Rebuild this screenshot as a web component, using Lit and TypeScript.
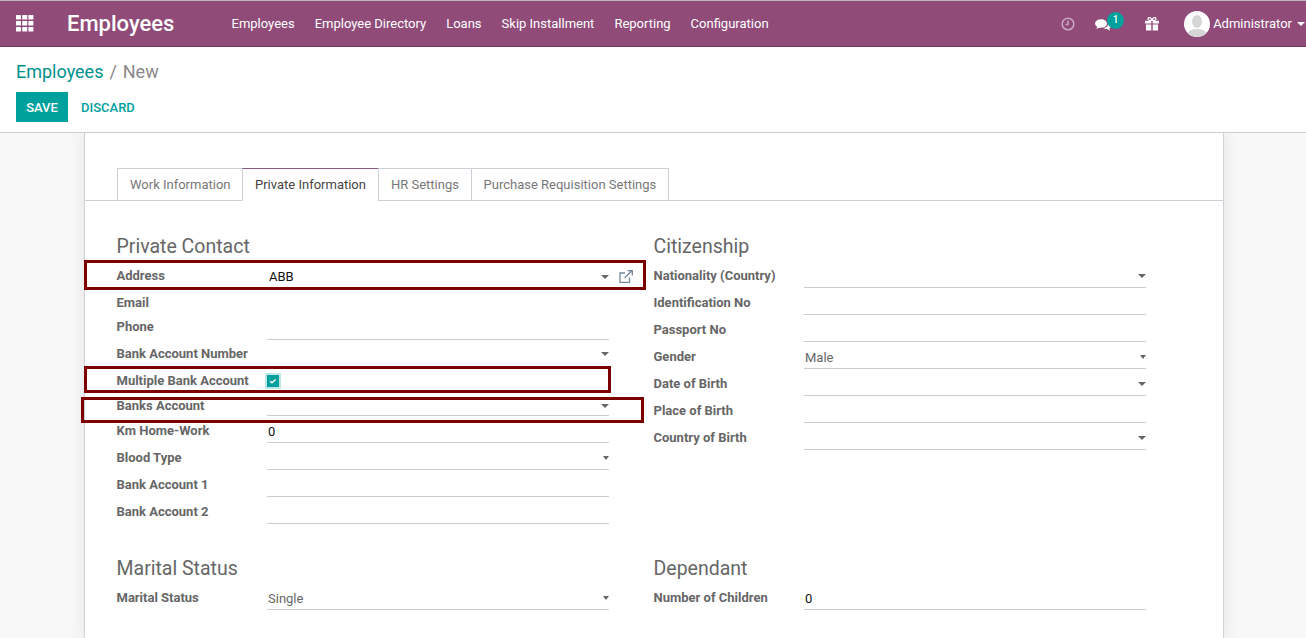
import { LitElement, html, css, svg } from "lit";
import { customElement } from "lit/decorators.js";

type Field = {
  label: string;
  h: number;
  value?: string;
  line?: boolean;
  caret?: boolean;
  small?: boolean;
  dark?: boolean;
  // label and value nudges, the source rows are not evenly spaced
  lt?: number;
  vt?: number;
  vx?: number;
};

const left: Field[] = [
  { label: "Address", h: 27, value: "ABB", caret: true, dark: true, lt: 3, vx: 2 },
  { label: "Email", h: 24, lt: 3 },
  { label: "Phone", h: 26, line: true, lt: 3 },
  { label: "Bank Account Number", h: 27, line: true, caret: true, lt: 4 },
  { label: "Multiple Bank Account", h: 25, lt: 4 },
  { label: "Banks Account", h: 24, line: true, caret: true, lt: 4 },
  { label: "Km Home-Work", h: 27, value: "0", line: true, dark: true, lt: 5, vt: 6 },
  { label: "Blood Type", h: 27, line: true, caret: true, small: true, lt: 5 },
  { label: "Bank Account 1", h: 27, line: true, lt: 5 },
  { label: "Bank Account 2", h: 27, line: true, lt: 5 },
];

const right: Field[] = [
  { label: "Nationality (Country)", h: 27, line: true, caret: true, lt: 5 },
  { label: "Identification No", h: 27, line: true, lt: 5 },
  { label: "Passport No", h: 27, line: true, lt: 5 },
  { label: "Gender", h: 27, value: "Male", line: true, caret: true, small: true, lt: 5, vt: 6 },
  { label: "Date of Birth", h: 27, line: true, caret: true, lt: 5 },
  { label: "Place of Birth", h: 27, line: true, lt: 5 },
  { label: "Country of Birth", h: 27, line: true, caret: true, lt: 5 },
];

const menu = ["Employees", "Employee Directory", "Loans", "Skip Installment", "Reporting", "Configuration"];
const tabs = ["Work Information", "Private Information", "HR Settings", "Purchase Requisition Settings"];

@customElement("app-root")
export class AppRoot extends LitElement {
  static styles = css`
    :host {
      display: block;
      height: 638px;
      overflow: hidden;
      position: relative;
      font-family: Roboto, "Liberation Sans", sans-serif;
      font-size: 13px;
      color: #666;
      background: #f8f8f8;
    }

    .navbar {
      box-sizing: border-box;
      height: 47px;
      display: flex;
      align-items: center;
      background: #904b79;
      border-top: 1px solid #b9b9b9;
      border-bottom: 1px solid #70385d;
      color: #fff;
    }

    .apps {
      display: block;
      margin-left: 16px;
    }

    .brand {
      margin-left: 33px;
      width: 164.5px;
      font-size: 22px;
      font-weight: 500;
    }

    .menu {
      display: flex;
      gap: 20px;
      font-size: 13px;
    }

    .systray {
      margin-left: auto;
      display: flex;
      align-items: center;
    }

    .clock { margin-right: 20px; }

    .chat {
      position: relative;
      margin-right: 34px;
      display: block;
      height: 14px;
      top: 1px;
    }

    .badge {
      position: absolute;
      left: 12px;
      top: -6px;
      width: 17px;
      height: 17px;
      border-radius: 50%;
      background: #00a09d;
      font-size: 10px;
      font-weight: 500;
      line-height: 16px;
      text-align: center;
    }

    .gift { margin-right: 25px; }

    .avatar { margin-right: 3px; }

    .user-caret {
      margin: 0 1px 0 5px;
      border-top: 4px solid #fff;
      border-left: 4px solid transparent;
      border-right: 4px solid transparent;
    }

    .control {
      position: relative;
      z-index: 1;
      box-sizing: border-box;
      height: 86px;
      padding: 14px 16px 0;
      background: #fff;
      border-bottom: 1px solid #ccc;
    }

    .crumbs {
      font-size: 18px;
      line-height: 21px;
      color: #888;
    }

    .crumbs a { color: #00918e; }

    .crumbs span { margin: 0 1.5px; }

    .actions {
      display: flex;
      align-items: center;
      margin-top: 10px;
    }

    .save {
      width: 52px;
      height: 30px;
      background: #00a09d;
      color: #fff;
      font-weight: 500;
      line-height: 31px;
      text-align: center;
    }

    .discard {
      margin-left: 13px;
      color: #00a09d;
      font-weight: 500;
    }

    .sheet {
      box-sizing: border-box;
      width: 1140px;
      height: 506px;
      margin-left: 84px;
      padding-top: 35px;
      background: #fff;
      border-left: 1px solid #cfd2d8;
      border-right: 1px solid #cfd2d8;
      box-shadow: 0 0 16px rgba(0, 0, 0, 0.09);
    }

    .tabs {
      display: flex;
      height: 33px;
      box-sizing: border-box;
      padding-left: 32px;
      border-bottom: 1px solid #ccd0d6;
    }

    .tab {
      box-sizing: border-box;
      height: 33px;
      padding: 0 12px;
      line-height: 32px;
      border: 1px solid #ccd0d6;
      margin-right: -1px;
      color: #777;
    }

    .tab:first-child { padding: 0 11.5px 0 12px; }

    .tab:last-child { padding: 0 11.6px; }

    .tab.active {
      color: #444;
      background: #fff;
      border-top-color: #875a7b;
      border-bottom-color: #fff;
    }

    .columns {
      display: grid;
      grid-template-columns: 537px 493px;
      padding: 31px 0 0 32px;
    }

    h2 {
      margin: 0 0 0 -0.5px;
      height: 31px;
      font-size: 19.5px;
      font-weight: 400;
      line-height: 30px;
      color: #666;
    }

    .group.tight h2 { height: 29px; }

    .group.lower { margin-top: 30px; }

    .row {
      display: grid;
      grid-template-columns: 150px 342px;
      align-items: start;
    }

    .row label {
      margin-left: -0.5px;
      font-weight: 700;
      font-size: 13px;
      line-height: 20px;
    }

    .val {
      box-sizing: border-box;
      height: 100%;
      position: relative;
      line-height: 20px;
      color: #666;
    }

    .val.dark { color: #111; }

    .val.line { border-bottom: 1px solid #ccc; }

    .caret {
      position: absolute;
      right: 0;
      top: 12px;
      border-top: 4px solid #666;
      border-left: 4px solid transparent;
      border-right: 4px solid transparent;
    }

    .caret.small {
      top: 13px;
      border-left-width: 3px;
      border-right-width: 3px;
    }

    .tight .caret { top: 13px; }

    .lower .caret { top: 11px; }

    .ext {
      position: absolute;
      right: -24px;
      top: 7px;
    }

    .check {
      display: block;
      width: 12px;
      height: 12px;
      margin: 4px 0 0 -1px;
      background: #00a09d;
      box-shadow: 0 0 0 2px #bfe7e6;
    }

    .check svg { display: block; }

    .mark {
      position: absolute;
      z-index: 2;
      box-sizing: border-box;
      border: 3px solid #7d0000;
      pointer-events: none;
    }

    .m1 { left: 84px; top: 260px; width: 562px; height: 30px; }
    .m2 { left: 84px; top: 366px; width: 527px; height: 27px; }
    .m3 { left: 81px; top: 397px; width: 563px; height: 26px; }
  `;

  private field(f: Field, ext = false, check = false) {
    return html`<div class="row" style="height:${f.h}px">
      <label style="padding-top:${f.lt ?? 3}px">${f.label}</label>
      <div
        class="val ${f.line ? "line" : ""} ${f.dark ? "dark" : ""}"
        style="padding:${f.vt ?? 4}px 0 0 ${f.vx ?? 1}px"
      >
        ${f.value ?? ""}
        ${check
          ? html`<span class="check">
              <svg width="12" height="12" viewBox="0 0 12 12"><path d="M3.200 6.200l1.800 1.600 3.600-3.400" fill="none" stroke="#fff" stroke-width="1.400"/></svg>
            </span>`
          : ""}
        ${f.caret ? html`<span class="caret ${f.small ? "small" : ""}"></span>` : ""}
        ${ext
          ? html`<svg class="ext" width="14" height="13" viewBox="0 0 14 13" fill="none" stroke="#76879a" stroke-width="1.300">
              <path d="M10.500 7.500v4.800H1V3h5"/>
              <path d="M5.500 8L12.500 1M8.500.7h4.800v4.800"/>
            </svg>`
          : ""}
      </div>
    </div>`;
  }

  private appsIcon() {
    return [0, 1, 2].flatMap((r) =>
      [0, 1, 2].map((c) => svg`<rect x=${c * 6.2} y=${r * 6} width="5" height="4.600" rx="0.6" fill="#fff"/>`)
    );
  }

  render() {
    return html`
      <div class="navbar">
        <svg class="apps" width="18" height="17" viewBox="0 0 18 17">${this.appsIcon()}</svg>
        <div class="brand">Employees</div>
        <div class="menu">${menu.map((m) => html`<span>${m}</span>`)}</div>
        <div class="systray">
          <svg class="clock" width="14" height="14" viewBox="0 0 14 14" fill="none" stroke="#c9a7c0" stroke-width="1.500">
            <circle cx="7" cy="7" r="5.800"/><path d="M7 3.500V7.500H4.500"/>
          </svg>
          <span class="chat">
            <svg width="16" height="14" viewBox="0 0 16 14" fill="#fff">
              <ellipse cx="6" cy="5.500" rx="6" ry="4.300"/>
              <path d="M2.500 8l-1 3 4-2z"/>
              <path d="M13 5.500c2 .8 3 2 2.500 3.400-.3.8-.8 1.200-1.200 1.500l.7 2.300-3-1.800c-1.300.1-2.600-.2-3.500-.9 2.800-.2 4.900-2 4.500-4.500z"/>
            </svg>
            <span class="badge">1</span>
          </span>
          <svg class="gift" width="14" height="14" viewBox="0 0 14 14" fill="#fff">
            <path d="M1 7.500h5.300V13.500H1zM7.700 7.500H13V13.500H7.700z"/>
            <path d="M0 3.800h6.300v2.800H0zM7.700 3.800H14v2.800H7.700z"/>
            <path d="M6.800 3.500C4.300 3.500 3 2.800 3 1.700 3 .6 4.300.2 5.200.8c1 .6 1.600 1.600 1.600 2.700zM7.200 3.500C9.700 3.500 11 2.800 11 1.700 11 .6 9.700.2 8.800.8c-1 .6-1.600 1.600-1.600 2.700z" fill="none" stroke="#fff" stroke-width="1.200"/>
          </svg>
          <svg class="avatar" width="26" height="26" viewBox="0 0 26 26">
            <circle cx="13" cy="13" r="13" fill="#fff"/>
            <clipPath id="av"><circle cx="13" cy="13" r="13"/></clipPath>
            <g clip-path="url(#av)" fill="#d6d6d6">
              <ellipse cx="13" cy="10.500" rx="5" ry="6.500"/>
              <path d="M3 26c0-6 4-8 10-8s10 2 10 8z"/>
            </g>
          </svg>
          <span>Administrator</span>
          <span class="user-caret"></span>
        </div>
      </div>

      <div class="control">
        <div class="crumbs"><a>Employees</a><span> / </span>New</div>
        <div class="actions">
          <div class="save">SAVE</div>
          <div class="discard">DISCARD</div>
        </div>
      </div>

      <div class="sheet">
        <div class="tabs">
          ${tabs.map((t, i) => html`<div class="tab ${i === 1 ? "active" : ""}">${t}</div>`)}
        </div>
        <div class="columns">
          <div class="group">
            <h2>Private Contact</h2>
            ${left.map((f, i) => this.field(f, i === 0, i === 4))}
          </div>
          <div class="group tight">
            <h2>Citizenship</h2>
            ${right.map((f) => this.field(f))}
          </div>
          <div class="group lower">
            <h2>Marital Status</h2>
            ${this.field({ label: "Marital Status", h: 25, value: "Single", line: true, caret: true, small: true, lt: 3 })}
          </div>
          <div class="group lower">
            <h2>Dependant</h2>
            ${this.field({ label: "Number of Children", h: 25, value: "0", line: true, dark: true, lt: 3 })}
          </div>
        </div>
      </div>

      <div class="mark m1"></div>
      <div class="mark m2"></div>
      <div class="mark m3"></div>
    `;
  }
}
